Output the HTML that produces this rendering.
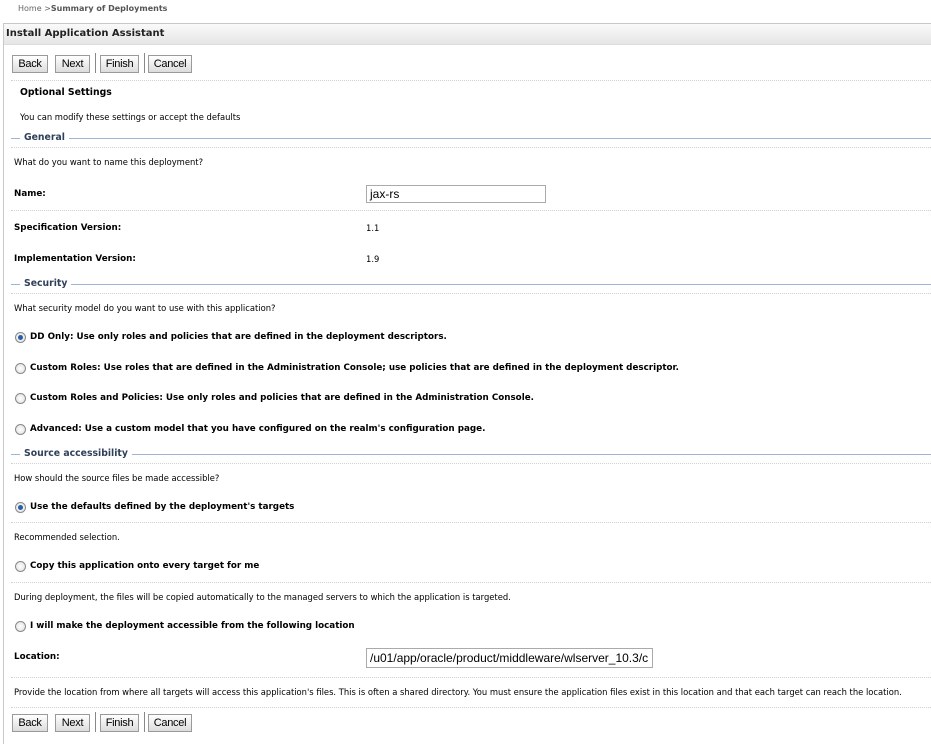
<!DOCTYPE html>
<html><head><style>
body{margin:0;width:931px;height:735px;background:#fff;font-family:"DejaVu Sans","Liberation Sans",sans-serif;font-size:8.4px;color:#000;position:relative;overflow:hidden}
.a{position:absolute;white-space:nowrap;line-height:12px}
.b{font-weight:bold;font-size:8.75px}
.frame{position:absolute;left:3px;top:23px;width:940px;height:720px;border-left:1px solid #c8c8c8;border-top:1px solid #c8c8c8}
.hdr{position:absolute;left:4px;top:24px;width:927px;height:20px;background:linear-gradient(#fafafa,#e6e6e6);border-bottom:1px solid #ddd}
.btn{position:absolute;height:16px;border:1px solid #9a9a9a;background:linear-gradient(#fff,#dcdcdc);font-family:"Liberation Sans",sans-serif;font-size:11px;line-height:16px;text-align:center;letter-spacing:-0.3px}
.sep{position:absolute;width:1px;height:20px;background:#888}
.dot{position:absolute;left:11px;width:920px;border-top:1px dotted #d0d0d0}
.leg{position:absolute;left:11px;width:920px;height:1px;background:#9fb3d2}
.legt{position:absolute;background:#fff;font-weight:bold;color:#2f3f5a;font-size:9.3px;padding:0 4px;line-height:12px}
.r{position:absolute;left:15px;width:9px;height:9px;border-radius:50%;border:1px solid #8a8a8a;background:radial-gradient(#fff,#ddd)}
.r.on::after{content:"";position:absolute;left:2px;top:2px;width:5px;height:5px;border-radius:50%;background:#2a5ea8}
.inp{position:absolute;border:1px solid #aaa;background:#fff;font-family:"Liberation Sans",sans-serif;font-size:12px;line-height:16px;padding-left:3px;overflow:hidden}
</style></head><body>
<div class="a" style="left:18px;top:3px;color:#666;font-size:8px">Home &gt;<b style="color:#555">Summary of Deployments</b></div>
<div class="frame"></div>
<div class="hdr"></div>
<div class="a b" style="left:6px;top:28px;font-size:10px;color:#222">Install Application Assistant</div>

<div class="btn" style="left:12px;top:55px;width:34px">Back</div>
<div class="btn" style="left:55px;top:55px;width:33px">Next</div>
<div class="sep" style="left:95px;top:53px"></div>
<div class="btn" style="left:100px;top:55px;width:37px">Finish</div>
<div class="sep" style="left:144px;top:53px"></div>
<div class="btn" style="left:148px;top:55px;width:42px">Cancel</div>
<div class="dot" style="top:80px"></div>

<div class="a b" style="left:20px;top:87px;font-size:9.3px">Optional Settings</div>
<div class="a" style="left:20px;top:111px">You can modify these settings or accept the defaults</div>

<div class="leg" style="top:138px"></div><div class="legt" style="left:20px;top:132px">General</div>
<div class="dot" style="top:147px"></div>
<div class="a" style="left:14px;top:156px">What do you want to name this deployment?</div>
<div class="a b" style="left:14px;top:188px">Name:</div>
<div class="inp" style="left:366px;top:185px;width:175px;height:16px">jax-rs</div>
<div class="dot" style="top:210px"></div>
<div class="a b" style="left:14px;top:222px">Specification Version:</div>
<div class="a" style="left:366px;top:222px">1.1</div>
<div class="a b" style="left:14px;top:253px">Implementation Version:</div>
<div class="a" style="left:366px;top:253px">1.9</div>

<div class="leg" style="top:284px"></div><div class="legt" style="left:20px;top:278px">Security</div>
<div class="dot" style="top:293px"></div>
<div class="a" style="left:14px;top:302px">What security model do you want to use with this application?</div>
<div class="r on" style="top:332px"></div><div class="a b" style="left:30px;top:331px">DD Only: Use only roles and policies that are defined in the deployment descriptors.</div>
<div class="r" style="top:363px"></div><div class="a b" style="left:30px;top:362px">Custom Roles: Use roles that are defined in the Administration Console; use policies that are defined in the deployment descriptor.</div>
<div class="r" style="top:393px"></div><div class="a b" style="left:30px;top:392px">Custom Roles and Policies: Use only roles and policies that are defined in the Administration Console.</div>
<div class="r" style="top:424px"></div><div class="a b" style="left:30px;top:423px">Advanced: Use a custom model that you have configured on the realm's configuration page.</div>

<div class="leg" style="top:454px"></div><div class="legt" style="left:20px;top:448px">Source accessibility</div>
<div class="dot" style="top:463px"></div>
<div class="a" style="left:14px;top:472px">How should the source files be made accessible?</div>
<div class="r on" style="top:502px"></div><div class="a b" style="left:30px;top:501px">Use the defaults defined by the deployment's targets</div>
<div class="dot" style="top:522px"></div>
<div class="a" style="left:14px;top:531px">Recommended selection.</div>
<div class="r" style="top:561px"></div><div class="a b" style="left:30px;top:560px">Copy this application onto every target for me</div>
<div class="dot" style="top:582px"></div>
<div class="a" style="left:14px;top:591px">During deployment, the files will be copied automatically to the managed servers to which the application is targeted.</div>
<div class="r" style="top:621px"></div><div class="a b" style="left:30px;top:620px">I will make the deployment accessible from the following location</div>
<div class="a b" style="left:14px;top:651px">Location:</div>
<div class="inp" style="left:366px;top:648px;width:282px;height:18px;line-height:18px">/u01/app/oracle/product/middleware/wlserver_10.3/c</div>
<div class="dot" style="top:677px"></div>
<div class="a" style="left:14px;top:686px">Provide the location from where all targets will access this application's files. This is often a shared directory. You must ensure the application files exist in this location and that each target can reach the location.</div>
<div class="dot" style="top:707px"></div>

<div class="btn" style="left:12px;top:714px;width:34px">Back</div>
<div class="btn" style="left:55px;top:714px;width:33px">Next</div>
<div class="sep" style="left:95px;top:712px"></div>
<div class="btn" style="left:100px;top:714px;width:37px">Finish</div>
<div class="sep" style="left:144px;top:712px"></div>
<div class="btn" style="left:148px;top:714px;width:42px">Cancel</div>
</body></html>
